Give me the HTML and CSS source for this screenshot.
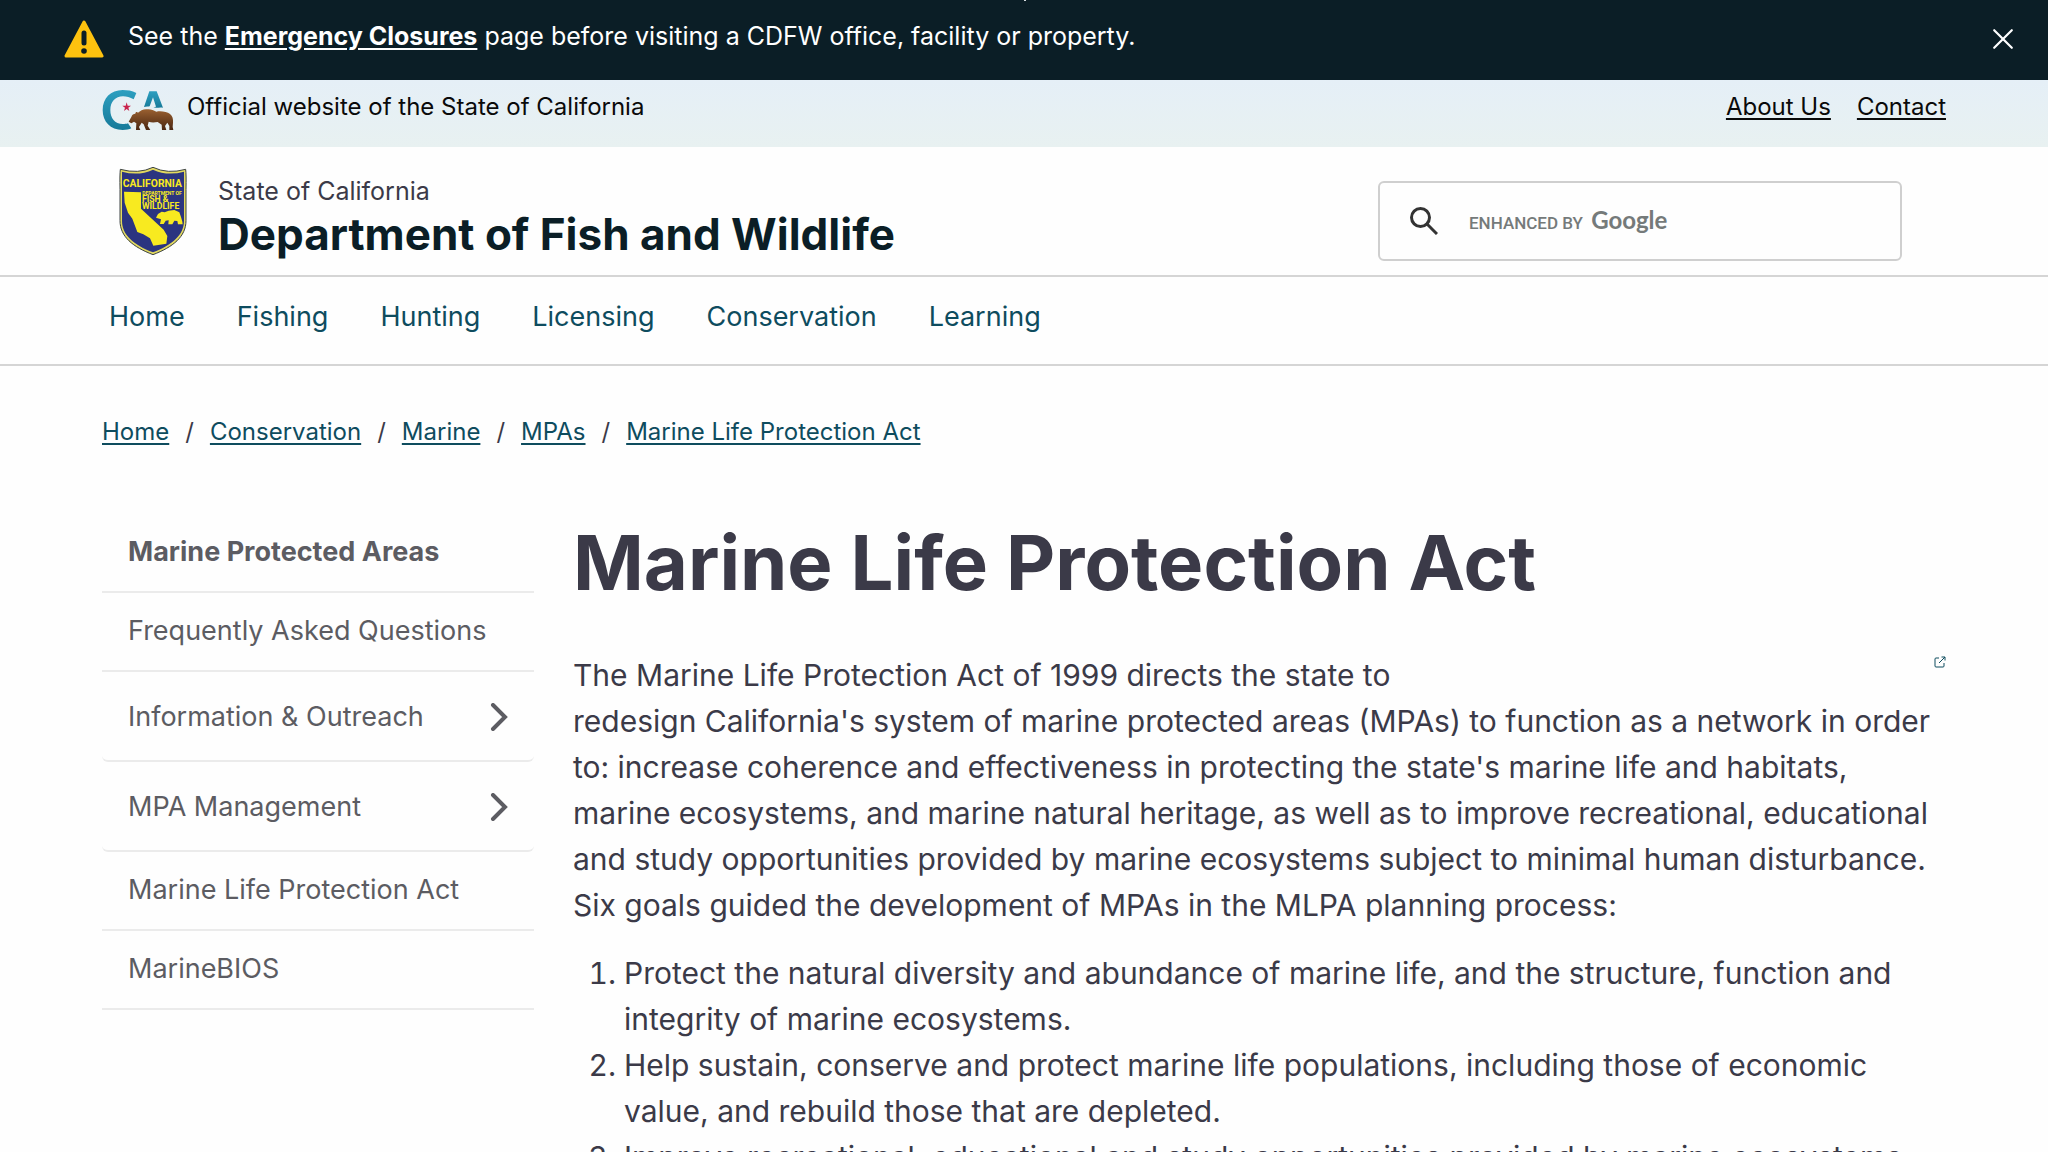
FILE: index.html
```html
<!DOCTYPE html>
<html lang="en">
<head>
  <meta charset="UTF-8">
  <meta name="viewport" content="width=device-width, initial-scale=1.0">
  <title>Marine Life Protection Act</title>
  <link rel="stylesheet" href="styles.css">
</head>
<body>
  <div class="alert-banner" role="alert">
    <svg class="alert-icon" viewBox="0 0 40 38" aria-hidden="true">
      <path d="M20 2 L38 36 H2 Z" fill="#fec20f" stroke="#fec20f" stroke-width="3" stroke-linejoin="round"/>
      <path d="M20 13 V23" stroke="#0b1e26" stroke-width="5" stroke-linecap="round"/>
      <circle cx="20" cy="31" r="2.8" fill="#0b1e26"/>
    </svg>
    <p class="alert-text">See the <a href="#">Emergency Closures</a> page before visiting a CDFW office, facility or property.</p>
    <button class="alert-close" type="button" aria-label="Close alert">
      <svg viewBox="0 0 20 20"><path d="M2 2 L18 18 M18 2 L2 18"/></svg>
    </button>
  </div>

  <div class="utility-bar">
    <svg class="ca-logo" viewBox="36 26 216 126" aria-hidden="true">
      <defs>
        <linearGradient id="ca-blue" x1="0" y1="0" x2="0" y2="1">
          <stop offset="0" stop-color="#2d9fc0"/>
          <stop offset="1" stop-color="#177a99"/>
        </linearGradient>
        <linearGradient id="bear-brown" x1="0" y1="0" x2="0" y2="1">
          <stop offset="0" stop-color="#9a6030"/>
          <stop offset="1" stop-color="#4a2712"/>
        </linearGradient>
      </defs>
      <path d="M139 38 C126 31 112 29 98 29 C62 29 38 54 38 89 C38 124 61 149 98 149 C109 149 118 147 124 144 L114 129 C109 131 104 131 99 131 C74 131 61 113 61 89 C61 64 76 48 99 48 C110 48 120 51 131 57 Z" fill="url(#ca-blue)"/>
      <path d="M178 33 H200 L219 82 C208 80 199 84 190 81 L198 79 L189 51 L179 78 C174 79 169 79 162 80 Z" fill="url(#ca-blue)"/>
      <path d="M110 66 L113 76 L123 76 L115 82 L118 92 L110 86 L102 92 L105 82 L97 76 L107 76 Z" fill="#c8234c"/>
      <path d="M116 124 L124 110 C126 103 131 100 136 100 C136 95 141 94 144 97 C151 91 161 85 173 87 C183 86 190 91 199 94 C212 91 231 94 240 101 C248 107 250 117 249 127 L248 140 L250 149 H238 L238 137 L232 127 L225 137 L229 149 H216 L215 133 L203 125 C192 127 184 127 176 124 L173 136 L181 149 H168 L161 132 L155 127 L147 140 L151 149 H138 L139 129 L132 124 L124 129 Z" fill="url(#bear-brown)"/>
    </svg>
    <p class="utility-text">Official website of the State of California</p>
    <nav class="utility-links" aria-label="Utility">
      <a href="#">About Us</a>
      <a href="#">Contact</a>
    </nav>
  </div>

  <header class="site-header">
    <svg class="dept-logo" viewBox="56 32 208 270" role="img" aria-label="California Department of Fish and Wildlife">
      <path d="M62 42 Q116 57 160 36 Q204 57 258 42 Q260 58 259 102 V196 C259 244 220 275 160 298 C100 275 61 244 61 196 V102 Q60 58 62 42 Z" fill="#e2d95f" stroke="#3d4345" stroke-width="3"/>
      <path d="M67 49 Q117 63 160 43 Q203 63 253 49 V196 C253 239 218 268 160 291 C102 268 67 239 67 196 Z" fill="#2b3480"/>
      <path d="M73 109 L124 111 L124 160 L192 223 L203 242 L200 265 L161 271 L151 249 L131 237 L113 230 L98 190 L85 172 L75 142 Z" fill="#f8ea20"/>
      <path d="M169 187 L175 176 L186 169 L195 171 L207 166 L224 164 L239 171 L244 185 L248 199 L249 207 H235 L233 197 L224 196 L218 207 H206 L207 195 L198 196 L192 206 H181 L184 192 Z" fill="#f8ea20"/>
      <text class="logo-text logo-title" x="158" y="96">CALIFORNIA</text>
      <text class="logo-text logo-small" x="187" y="120">DEPARTMENT OF</text>
      <text class="logo-text logo-mid" x="127" y="139">FISH &amp;</text>
      <text class="logo-text logo-mid" x="127" y="160">WILDLIFE</text>
    </svg>
    <div class="site-name">
      <p class="site-state">State of California</p>
      <p class="site-dept">Department of Fish and Wildlife</p>
    </div>
    <form class="search">
      <button class="search-button" type="submit" aria-label="Search">
        <svg viewBox="0 0 28 28"><circle cx="10.5" cy="10.5" r="9"/><path d="M17 17 L27 27"/></svg>
      </button>
      <label class="search-label" for="search-input">ENHANCED BY <span class="search-brand">Google</span></label>
      <input class="search-input" id="search-input" type="text">
    </form>
  </header>

  <nav class="main-nav" aria-label="Main">
    <a href="#">Home</a>
    <a href="#">Fishing</a>
    <a href="#">Hunting</a>
    <a href="#">Licensing</a>
    <a href="#">Conservation</a>
    <a href="#">Learning</a>
  </nav>

  <nav aria-label="Breadcrumb">
    <ol class="breadcrumb">
      <li><a href="#">Home</a></li>
      <li><a href="#">Conservation</a></li>
      <li><a href="#">Marine</a></li>
      <li><a href="#">MPAs</a></li>
      <li><a href="#">Marine Life Protection Act</a></li>
    </ol>
  </nav>

  <div class="page">
    <nav class="side-nav" aria-label="Section">
      <a class="side-title" href="#">Marine Protected Areas</a>
      <a href="#">Frequently Asked Questions</a>
      <button type="button">Information &amp; Outreach
        <svg viewBox="0 0 18 28"><path d="M3 2 L15 14 L3 26"/></svg>
      </button>
      <button type="button">MPA Management
        <svg viewBox="0 0 18 28"><path d="M3 2 L15 14 L3 26"/></svg>
      </button>
      <a href="#">Marine Life Protection Act</a>
      <a href="#">MarineBIOS</a>
    </nav>

    <main class="content">
      <h1>Marine Life Protection Act</h1>
      <p>
        <a class="external" href="#" aria-label="Opens in new window">
          <svg viewBox="0 0 12 12"><path d="M5 2 H2 Q1 2 1 3 V10 Q1 11 2 11 H9 Q10 11 10 10 V7 M5 7 L11 1 M7.5 1 H11 V4.5"/></svg>
        </a>
        The Marine Life Protection Act of 1999 directs the state to<br>
        redesign California's system of marine protected areas (MPAs) to function as a network in order to: increase coherence and effectiveness in protecting the state's marine life and habitats, marine ecosystems, and marine natural heritage, as well as to improve recreational, educational and study opportunities provided by marine ecosystems subject to minimal human disturbance. Six goals guided the development of MPAs in the MLPA planning process:
      </p>
      <ol>
        <li>Protect the natural diversity and abundance of marine life, and the structure, function and integrity of marine ecosystems.</li>
        <li>Help sustain, conserve and protect marine life populations, including those of economic value, and rebuild those that are depleted.</li>
        <li>Improve recreational, educational and study opportunities provided by marine ecosystems</li>
      </ol>
    </main>
  </div>
</body>
</html>
```
FILE: styles.css
```css
* {
  margin: 0;
  padding: 0;
  box-sizing: border-box;
}

body {
  height: 100vh;
  overflow: hidden;
  background-color: #fefefe;
  color: #3b3a48;
  font-family: Inter, "Open Sans", sans-serif;
  font-size: 30px;
  line-height: 46px;
}

svg {
  display: block;
}

button {
  border: 0;
  background: none;
  color: inherit;
  font: inherit;
  cursor: pointer;
}

/* Alert */
.alert-banner {
  position: relative;
  display: flex;
  gap: 24px;
  height: 80px;
  padding: 18px 34px 0 64px;
  background-color: #0b1e26;
  color: #fff;
  font-size: 25px;
  line-height: 36px;
}

.alert-banner::before {
  content: "";
  position: absolute;
  top: 0;
  left: 50%;
  width: 2px;
  height: 1px;
  background-color: #d5dcdf;
}

.alert-icon {
  width: 40px;
  height: 42px;
}

.alert-text a {
  color: #fff;
  font-weight: 700;
  text-underline-offset: 3px;
}

.alert-close {
  width: 22px;
  height: 42px;
  margin-left: auto;
}

.alert-close svg {
  width: 22px;
  height: 22px;
  fill: none;
  stroke: #fff;
  stroke-width: 2;
  stroke-linecap: round;
}

/* Utility bar */
.utility-bar {
  display: flex;
  gap: 13px;
  height: 67px;
  padding: 9px 102px 0;
  background: linear-gradient(#e5eff7, #e8f1f1);
  color: #0a0a0a;
  font-size: 24px;
  line-height: 36px;
}

.ca-logo {
  width: 72px;
  height: 42px;
}

.utility-links {
  display: flex;
  gap: 26px;
  margin-left: auto;
}

.utility-links a {
  color: #0a0a0a;
  text-underline-offset: 3px;
}

/* Header */
.site-header {
  display: flex;
  height: 130px;
  padding: 19px 146px 0 118px;
  border-bottom: 2px solid #d5d5d5;
}

.dept-logo {
  width: 70px;
  height: 90px;
}

.logo-text {
  fill: #f8ea20;
  font-family: Roboto, sans-serif;
  font-weight: 700;
}

.logo-title {
  font-size: 31px;
  text-anchor: middle;
}

.logo-small {
  font-size: 15px;
  text-anchor: middle;
}

.logo-mid {
  font-size: 26px;
}

.site-name {
  margin-left: 30px;
}

.site-state {
  margin-top: 6px;
  font-size: 25px;
  line-height: 38px;
}

.site-dept {
  color: #0b1e26;
  font-size: 44px;
  font-weight: 700;
  line-height: 48px;
}

.search {
  display: flex;
  align-items: center;
  width: 524px;
  height: 80px;
  margin: 15px 0 0 auto;
  padding-left: 30px;
  border: 2px solid #cfcfcf;
  border-radius: 6px;
}

.search-button svg {
  width: 28px;
  height: 28px;
  fill: none;
  stroke: #333;
  stroke-width: 3;
}

.search-label {
  margin-left: 31px;
  color: #757a7a;
  font-family: Roboto, sans-serif;
  font-size: 17px;
  font-weight: 500;
  white-space: nowrap;
}

.search-brand {
  margin-left: 4px;
  font-family: Lato, sans-serif;
  font-size: 24px;
  font-weight: 700;
}

.search-input {
  flex: 1;
  min-width: 0;
  height: 60px;
  border: 0;
  outline: 0;
  background: none;
  font: inherit;
}

/* Navigation */
.main-nav {
  display: flex;
  gap: 52px;
  height: 89px;
  padding: 18px 109px 0;
  border-bottom: 2px solid #d5d5d5;
  font-size: 27px;
  line-height: 44px;
}

.main-nav a {
  color: #0e4c5e;
  text-decoration: none;
}

.breadcrumb {
  display: flex;
  padding: 48px 102px 0;
  font-size: 24px;
  line-height: 36px;
  list-style: none;
}

.breadcrumb li + li::before {
  content: "/";
  margin: 0 16px;
}

.breadcrumb a {
  color: #0e4c5e;
  text-underline-offset: 3px;
}

/* Page */
.page {
  display: grid;
  grid-template-columns: 432px 1fr;
  gap: 39px;
  padding: 64px 102px 0;
}

.side-nav {
  color: #5c5c62;
  font-size: 27px;
  line-height: 40px;
}

.side-nav a {
  display: block;
  height: 79px;
  padding: 18px 26px;
  border-bottom: 2px solid #ebebeb;
  color: inherit;
  text-decoration: none;
}

.side-nav .side-title {
  font-weight: 700;
}

.side-nav button {
  display: flex;
  justify-content: space-between;
  align-items: center;
  width: 100%;
  height: 90px;
  padding: 2px 26px 0;
  border-bottom: 2px solid #ebebeb;
  border-radius: 6px;
}

.side-nav svg {
  width: 18px;
  height: 28px;
  fill: none;
  stroke: #5c5c62;
  stroke-width: 4;
  stroke-linecap: round;
}

.content h1 {
  margin: 2px 0 44px;
  font-size: 76px;
  line-height: 92px;
}

.content p {
  margin-bottom: 22px;
}

.content ol {
  padding-left: 51px;
}

.external {
  float: right;
  padding-top: 4px;
}

.external svg {
  width: 12px;
  height: 12px;
  fill: none;
  stroke: #0e4c5e;
}
```
